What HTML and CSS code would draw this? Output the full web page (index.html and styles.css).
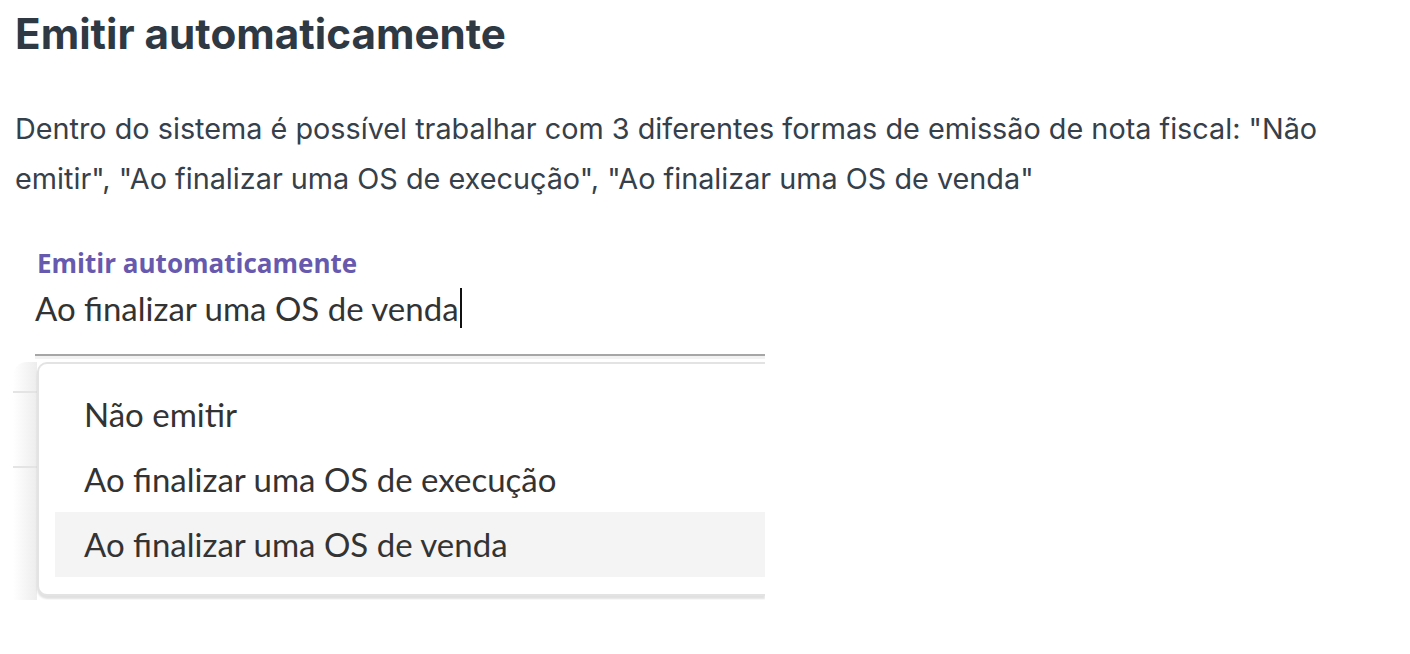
FILE: index.html
```html
<!DOCTYPE html>
<html lang="pt">
<head>
<meta charset="utf-8">
<link rel="stylesheet" href="styles.css">
</head>
<body>
<h1 class="title">Emitir automaticamente</h1>
<p class="text">Dentro do sistema é possível trabalhar com 3 diferentes formas de emissão de nota fiscal: "Não emitir", "Ao finalizar uma OS de execução", "Ao finalizar uma OS de venda"</p>
<div class="shot">
  <div class="field">
    <div class="label">Emitir automaticamente</div>
    <div class="value">Ao finalizar uma OS de venda<span class="caret"></span></div>
    <div class="underline"></div>
  </div>
  <div class="lower">
    <div class="behind">
      <div class="behind-row first"></div>
      <div class="behind-row"></div>
    </div>
    <div class="menu">
      <div class="option">Não emitir</div>
      <div class="option">Ao finalizar uma OS de execução</div>
      <div class="option selected">Ao finalizar uma OS de venda</div>
    </div>
  </div>
</div>
</body>
</html>
```

FILE: styles.css
```css
html, body {
  margin: 0;
  padding: 0;
  background: #ffffff;
}
body {
  padding: 0 0 0 15px;
  font-family: Inter, "Liberation Sans", sans-serif;
  color: #333d47;
}
.title {
  margin: 0;
  padding-top: 9px;
  font-size: 42.2px;
  line-height: 50px;
  font-weight: 700;
  color: #2e3944;
}
.text {
  margin: 45px 0 0 0;
  font-size: 28.8px;
  line-height: 50px;
  color: #36404a;
  width: 1340px;
}
.shot {
  margin: 26px 0 0 -2px;
  width: 752px;
  height: 370px;
  overflow: hidden;
  font-family: Lato, "Open Sans", sans-serif;
}
.field {
  padding: 18px 0 0 22px;
}
.label {
  font-family: "Open Sans", Lato, sans-serif;
  font-size: 26px;
  line-height: 30px;
  font-weight: 700;
  color: #6659ae;
  padding-left: 2px;
}
.value {
  font-size: 33px;
  line-height: 40px;
  color: #333333;
  margin-top: 10px;
  display: flex;
  align-items: center;
}
.caret {
  display: inline-block;
  width: 2px;
  height: 40px;
  background: #111;
  margin-left: 1px;
}
.underline {
  margin-top: 26px;
  height: 2px;
  background: #a6a6a6;
  border-bottom: 3px solid #f2f2f2;
}
.lower {
  display: flex;
  height: 240px;
}
.behind {
  width: 24px;
  flex: none;
  margin-top: 3px;
  height: 238px;
  border-top-left-radius: 14px;
  background: linear-gradient(to right, #ffffff, #ededed);
}
.behind-row {
  height: 73px;
  border-bottom: 2px solid #e4e4e4;
}
.behind-row.first {
  height: 29px;
}
.menu {
  flex: 1;
  margin-top: 3px;
  height: 234px;
  background: #fff;
  border: 2px solid #e3e3e3;
  border-right: none;
  border-radius: 10px 0 0 10px;
  box-shadow: 0 3px 2px rgba(0,0,0,0.12);
  padding: 18px 0 0 16px;
  box-sizing: border-box;
}
.option {
  height: 65px;
  line-height: 65px;
  padding-left: 29px;
  font-size: 33px;
  color: #333333;
}
.selected {
  background: #f4f4f4;
}
```
